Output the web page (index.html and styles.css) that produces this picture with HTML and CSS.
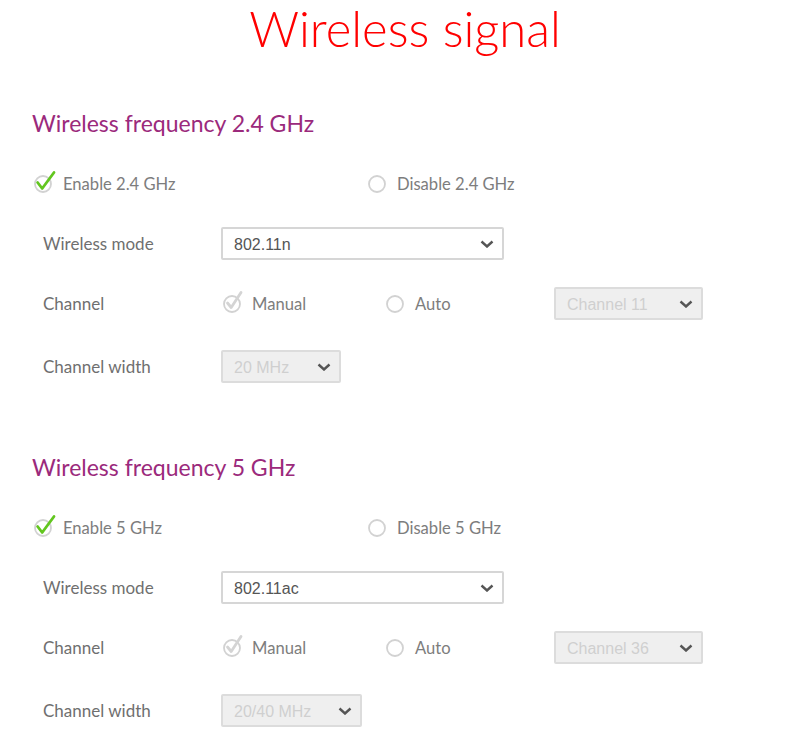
FILE: index.html
```html
<!DOCTYPE html>
<html lang="en">
<head>
<meta charset="utf-8">
<title>Wireless signal</title>
<link rel="stylesheet" href="styles.css">
</head>
<body>
<h1 class="title">Wireless signal</h1>

<section class="band">
  <h2 class="band-title">Wireless frequency 2.4 GHz</h2>
  <div class="row radio-row">
    <label class="radio radio-enable">
      <svg class="radio-icon" viewBox="0 0 24 24" width="24" height="24"><circle cx="9" cy="14" r="8" class="ring"/><polyline points="3.6,12.5 8.2,18.5 20,2.5" class="check"/></svg>
      <span>Enable 2.4 GHz</span>
    </label>
    <label class="radio radio-disable">
      <svg class="radio-icon" viewBox="0 0 24 24" width="24" height="24"><circle cx="9" cy="14" r="8" class="ring"/></svg>
      <span>Disable 2.4 GHz</span>
    </label>
  </div>
  <div class="row field-row">
    <span class="field-label">Wireless mode</span>
    <div class="select select-mode"><span>802.11n</span><svg class="chev" viewBox="0 0 14 8" width="14" height="8"><polyline points="1.5,1.5 7,6.5 12.5,1.5"/></svg></div>
  </div>
  <div class="row field-row">
    <span class="field-label">Channel</span>
    <div class="channel-opts">
      <label class="radio radio-manual">
        <svg class="radio-icon" viewBox="0 0 24 24" width="24" height="24"><circle cx="9" cy="14" r="8" class="ring"/><polyline points="4.5,13 8.2,17.5 18,2.5" class="check check-off"/></svg>
        <span>Manual</span>
      </label>
      <label class="radio radio-auto">
        <svg class="radio-icon" viewBox="0 0 24 24" width="24" height="24"><circle cx="9" cy="14" r="8" class="ring"/></svg>
        <span>Auto</span>
      </label>
      <div class="select select-off select-channel"><span>Channel 11</span><svg class="chev" viewBox="0 0 14 8" width="14" height="8"><polyline points="1.5,1.5 7,6.5 12.5,1.5"/></svg></div>
    </div>
  </div>
  <div class="row field-row width-row">
    <span class="field-label">Channel width</span>
    <div class="select select-off select-width"><span>20 MHz</span><svg class="chev" viewBox="0 0 14 8" width="14" height="8"><polyline points="1.5,1.5 7,6.5 12.5,1.5"/></svg></div>
  </div>
</section>

<section class="band band-second">
  <h2 class="band-title">Wireless frequency 5 GHz</h2>
  <div class="row radio-row">
    <label class="radio radio-enable">
      <svg class="radio-icon" viewBox="0 0 24 24" width="24" height="24"><circle cx="9" cy="14" r="8" class="ring"/><polyline points="3.6,12.5 8.2,18.5 20,2.5" class="check"/></svg>
      <span>Enable 5 GHz</span>
    </label>
    <label class="radio radio-disable">
      <svg class="radio-icon" viewBox="0 0 24 24" width="24" height="24"><circle cx="9" cy="14" r="8" class="ring"/></svg>
      <span>Disable 5 GHz</span>
    </label>
  </div>
  <div class="row field-row">
    <span class="field-label">Wireless mode</span>
    <div class="select select-mode"><span>802.11ac</span><svg class="chev" viewBox="0 0 14 8" width="14" height="8"><polyline points="1.5,1.5 7,6.5 12.5,1.5"/></svg></div>
  </div>
  <div class="row field-row">
    <span class="field-label">Channel</span>
    <div class="channel-opts">
      <label class="radio radio-manual">
        <svg class="radio-icon" viewBox="0 0 24 24" width="24" height="24"><circle cx="9" cy="14" r="8" class="ring"/><polyline points="4.5,13 8.2,17.5 18,2.5" class="check check-off"/></svg>
        <span>Manual</span>
      </label>
      <label class="radio radio-auto">
        <svg class="radio-icon" viewBox="0 0 24 24" width="24" height="24"><circle cx="9" cy="14" r="8" class="ring"/></svg>
        <span>Auto</span>
      </label>
      <div class="select select-off select-channel"><span>Channel 36</span><svg class="chev" viewBox="0 0 14 8" width="14" height="8"><polyline points="1.5,1.5 7,6.5 12.5,1.5"/></svg></div>
    </div>
  </div>
  <div class="row field-row width-row">
    <span class="field-label">Channel width</span>
    <div class="select select-off select-width2"><span>20/40 MHz</span><svg class="chev" viewBox="0 0 14 8" width="14" height="8"><polyline points="1.5,1.5 7,6.5 12.5,1.5"/></svg></div>
  </div>
</section>
</body>
</html>
```

FILE: styles.css
```css
html, body {
  margin: 0;
  padding: 0;
  background: #ffffff;
}
body {
  font-family: Lato, "Liberation Sans", sans-serif;
  color: #777777;
  width: 810px;
}
.title {
  margin: 0;
  height: 94px;
  box-sizing: border-box;
  text-align: center;
  font-weight: 300;
  font-size: 49px;
  line-height: 56px;
  color: #ff0000;
}
.band {
  padding-left: 32px;
}
.band-second {
  margin-top: 38px;
}
.band-title {
  margin: 0;
  height: 60px;
  display: flex;
  align-items: center;
  padding-bottom: 3px;
  box-sizing: border-box;
  font-weight: 400;
  font-size: 23px;
  color: #9b2a7c;
}
.row {
  height: 60px;
  display: flex;
  align-items: center;
  padding-bottom: 1px;
  box-sizing: border-box;
}
.width-row {
  height: 66px;
}
.radio {
  display: flex;
  align-items: center;
  font-size: 16.6px;
  color: #7d7d7d;
}
.radio-icon {
  flex: none;
  margin-right: 5px;
  margin-top: -4px;
}
.ring {
  fill: #ffffff;
  stroke: #d2d2d2;
  stroke-width: 1.8;
}
.check {
  fill: none;
  stroke: #62c61f;
  stroke-width: 2.8;
  stroke-linecap: round;
  stroke-linejoin: round;
}
.check-off {
  stroke: #d4d4d4;
}
.radio-enable {
  margin-left: 2px;
  width: 334px;
}
.field-row {
  padding-left: 11px;
}
.field-label {
  width: 178px;
  flex: none;
  font-size: 17px;
  color: #6f6f6f;
}
.channel-opts {
  display: flex;
  align-items: center;
}
.radio-manual {
  margin-left: 2px;
  width: 163px;
}
.radio-auto {
  width: 168px;
}
.select {
  box-sizing: border-box;
  height: 33px;
  border: 2px solid #d6d6d6;
  border-radius: 2px;
  background: #ffffff;
  display: flex;
  align-items: center;
  justify-content: space-between;
  padding: 0 8px 0 11px;
  font-family: "Liberation Sans", Arial, sans-serif;
  font-size: 16px;
  color: #555555;
}
.select span {
  padding-top: 2px;
}
.chev {
  fill: none;
  stroke: #555555;
  stroke-width: 2.4;
}
.select-off {
  background: #efefef;
  border-color: #dcdcdc;
  color: #cfcfcf;
}
.select-mode {
  width: 283px;
}
.select-channel {
  width: 149px;
}
.select-width {
  width: 120px;
}
.select-width2 {
  width: 141px;
}
```
